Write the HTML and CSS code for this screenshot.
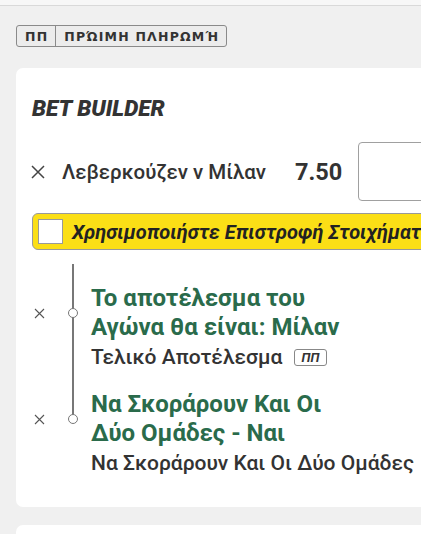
FILE: index.html
```html
<!DOCTYPE html>
<html lang="el">
<head>
<meta charset="utf-8">
<link rel="stylesheet" href="styles.css">
</head>
<body>
<div class="top-strip"></div>
<div class="badge">
  <span class="badge-cell">ΠΠ</span>
  <span class="badge-cell">ΠΡΏΙΜΗ ΠΛΗΡΩΜΉ</span>
</div>
<div class="card">
  <h2 class="title">BET BUILDER</h2>
  <div class="bet-row">
    <span class="remove big">
      <svg width="14" height="14" viewBox="0 0 14 14"><path d="M1 1L13 13M13 1L1 13" stroke="#444" stroke-width="1.5" fill="none"/></svg>
    </span>
    <span class="match">Λεβερκούζεν ν Μίλαν</span>
    <span class="odds">7.50</span>
    <span class="stake"></span>
  </div>
  <label class="cashback">
    <span class="checkbox"></span>
    <span class="cashback-text">Χρησιμοποιήστε Επιστροφή Στοιχήματος</span>
  </label>
  <div class="legs">
    <div class="leg">
      <span class="remove small">
        <svg width="11" height="11" viewBox="0 0 11 11"><path d="M1 1L10 10M10 1L1 10" stroke="#555" stroke-width="1.1" fill="none"/></svg>
      </span>
      <span class="node"></span>
      <div class="leg-title">Το αποτέλεσμα του<br>Αγώνα θα είναι: Μίλαν</div>
      <div class="leg-sub">Τελικό Αποτέλεσμα <span class="pp">ΠΠ</span></div>
    </div>
    <div class="leg">
      <span class="remove small">
        <svg width="11" height="11" viewBox="0 0 11 11"><path d="M1 1L10 10M10 1L1 10" stroke="#555" stroke-width="1.1" fill="none"/></svg>
      </span>
      <span class="node"></span>
      <div class="leg-title">Να Σκοράρουν Και Οι<br>Δύο Ομάδες - Ναι</div>
      <div class="leg-sub">Να Σκοράρουν Και Οι Δύο Ομάδες</div>
    </div>
  </div>
</div>
<div class="card next"></div>
</body>
</html>
```

FILE: styles.css
```css
html, body {
  margin: 0;
  padding: 0;
}
body {
  background: #f0f0f0;
  font-family: Roboto, "Noto Sans", sans-serif;
  color: #333;
  overflow: hidden;
  width: 421px;
  height: 534px;
}
.top-strip {
  height: 5px;
  background: #f7f7f7;
  border-bottom: 1px solid #d9d9d9;
}
.badge {
  display: inline-flex;
  margin: 19px 0 0 16px;
  border: 1px solid #8a8a8a;
  border-radius: 3px;
  background: #ececec;
  height: 20px;
}
.badge-cell {
  display: flex;
  align-items: center;
  padding: 0 7px 0 8px;
  font-family: "DejaVu Sans", Verdana, sans-serif;
  font-size: 12.5px;
  font-weight: 700;
  color: #333;
  letter-spacing: 1.2px;
}
.badge-cell + .badge-cell {
  border-left: 1px solid #8a8a8a;
}
.card {
  margin: 21px 0 0 16px;
  width: 440px;
  background: #fff;
  border-radius: 7px;
  box-sizing: border-box;
  padding: 27px 0 29px 16px;
}
.card.next {
  margin-top: 18px;
  height: 9px;
  padding: 0;
  border-radius: 7px 0 0 0;
}
.title {
  margin: 0;
  font-size: 22.5px;
  font-weight: 900;
  font-style: italic;
  line-height: 26px;
  color: #333;
}
.bet-row {
  display: flex;
  align-items: center;
  margin-top: 21px;
  height: 59px;
}
.remove {
  display: flex;
  align-items: center;
  justify-content: center;
}
.remove.big {
  width: 14px;
  margin-left: -1px;
  margin-right: 17px;
}
.match {
  font-size: 20.5px;
  font-weight: 500;
  color: #333;
}
.odds {
  margin-left: 29px;
  font-size: 23.5px;
  font-weight: 700;
  color: #333;
}
.stake {
  margin-left: 16px;
  width: 80px;
  height: 59px;
  box-sizing: border-box;
  border: 1px solid #a0a0a0;
  border-radius: 4px;
  flex: none;
}
.cashback {
  display: flex;
  align-items: center;
  margin-top: 12px;
  height: 37px;
  box-sizing: border-box;
  background: #fbdf16;
  border: 1px solid #999;
  border-radius: 6px;
  padding-left: 5px;
  white-space: nowrap;
  overflow: hidden;
}
.checkbox {
  width: 25px;
  height: 25px;
  box-sizing: border-box;
  background: #fff;
  border: 1px solid #999;
  flex: none;
}
.cashback-text {
  margin-left: 9px;
  font-size: 20px;
  font-weight: 700;
  font-style: italic;
  color: #222;
}
.legs {
  position: relative;
  margin-top: 14px;
  padding-top: 20px;
}
.legs::before {
  content: "";
  position: absolute;
  left: 40px;
  top: 0;
  height: 155px;
  width: 1.5px;
  background: #777;
}
.leg {
  display: grid;
  grid-template-columns: 20px 30px 1fr;
  margin-bottom: 18px;
}
.leg:last-child { margin-bottom: 0; }
.remove.small {
  grid-column: 1;
  grid-row: 1;
  align-self: center;
  justify-content: flex-start;
  padding-left: 2px;
}
.node {
  grid-column: 2;
  grid-row: 1;
  align-self: center;
  justify-self: start;
  margin-left: 16px;
  width: 10px;
  height: 10px;
  box-sizing: border-box;
  border: 1.5px solid #777;
  border-radius: 50%;
  background: #fff;
  position: relative;
  z-index: 1;
}
.leg-title {
  grid-column: 3;
  grid-row: 1;
  padding-left: 9px;
  font-size: 24px;
  font-weight: 700;
  line-height: 29px;
  color: #2a6b4b;
}
.leg-sub {
  grid-column: 3;
  grid-row: 2;
  padding-left: 9px;
  font-size: 21px;
  font-weight: 500;
  line-height: 30px;
  color: #333;
  white-space: nowrap;
}
.pp {
  display: inline-block;
  margin-left: 6px;
  border: 1.5px solid #888;
  border-radius: 3px;
  padding: 0 7px;
  font-size: 13px;
  font-weight: 700;
  font-style: italic;
  line-height: 15px;
  vertical-align: 2px;
  color: #333;
}
```
